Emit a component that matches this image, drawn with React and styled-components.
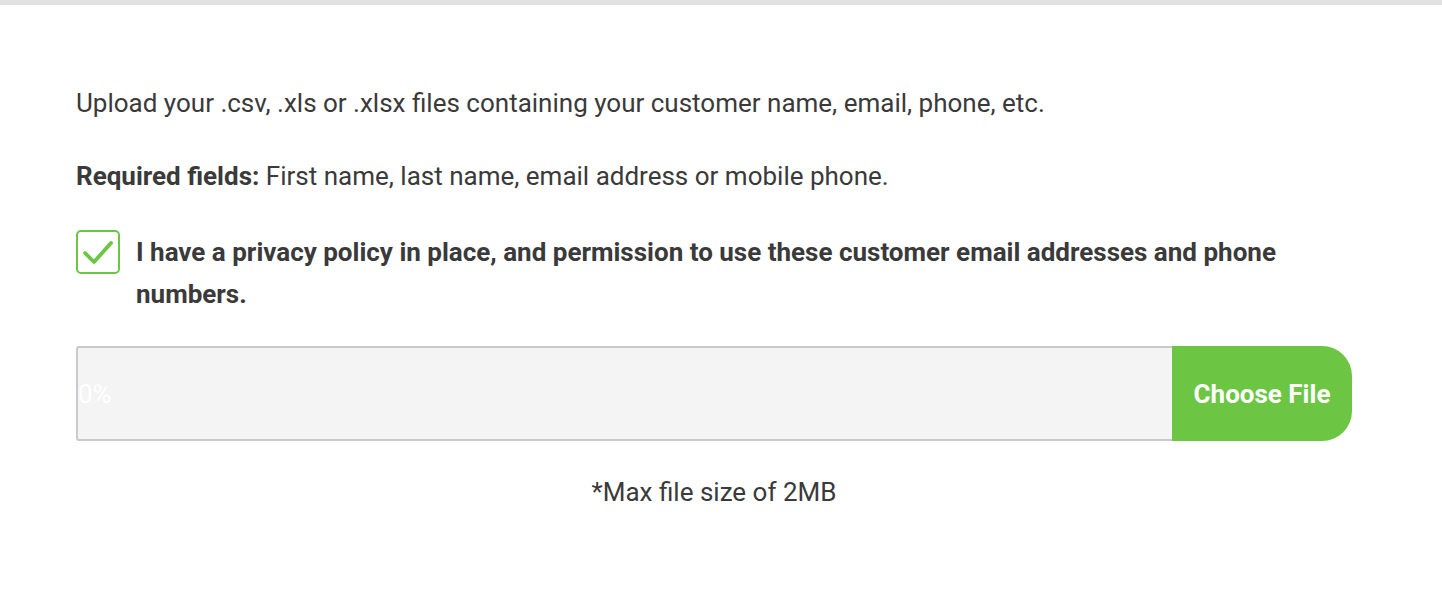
import React, { useState } from 'react'
import styled, { createGlobalStyle } from 'styled-components'

const GlobalStyle = createGlobalStyle`
  html, body {
    margin: 0;
    padding: 0;
    background: #ffffff;
  }
  body {
    font-family: 'Roboto', 'Liberation Sans', sans-serif;
    color: #3a3a3a;
  }
`

const TopBar = styled.div`
  height: 5px;
  background: #e2e2e2;
`

const Page = styled.div`
  padding: 83px 90px 0 76px;
`

const Paragraph = styled.p`
  margin: 0 0 ${p => p.$gap || 43}px;
  font-size: 26px;
  line-height: 30px;

  strong {
    font-weight: 700;
  }
`

const ConsentRow = styled.label`
  display: flex;
  align-items: flex-start;
  gap: 16px;
  cursor: pointer;
  margin-bottom: 31px;
`

const Box = styled.span`
  flex: 0 0 auto;
  display: flex;
  align-items: center;
  justify-content: center;
  width: 44px;
  height: 44px;
  box-sizing: border-box;
  border: 2px solid #6cc644;
  border-radius: 5px;
  background: #fff;
`

const ConsentText = styled.span`
  font-size: 26px;
  font-weight: 700;
  line-height: 42px;
  color: #3a3a3a;
  padding-right: 60px;
  margin-top: 1px;
`

const Uploader = styled.div`
  display: flex;
  height: 95px;
`

const Progress = styled.div`
  flex: 1;
  display: flex;
  align-items: center;
  box-sizing: border-box;
  background: #f4f4f4;
  border: 2px solid #c9cacd;
  border-right: none;
  border-radius: 3px 0 0 3px;
  font-size: 26px;
  color: #ffffff;
`

const ChooseButton = styled.button`
  flex: 0 0 180px;
  border: none;
  background: #6cc644;
  color: #ffffff;
  font-family: 'Roboto', 'Liberation Sans', sans-serif;
  font-weight: 700;
  font-size: 26px;
  border-radius: 0 30px 30px 0;
  cursor: pointer;
`

const Note = styled.p`
  margin: 36px 0 0;
  text-align: center;
  font-size: 26px;
  line-height: 30px;
  color: #3a3a3a;
`

export default function App() {
  const [checked, setChecked] = useState(true)
  return (
    <>
      <GlobalStyle />
      <TopBar />
      <Page>
        <Paragraph>
          Upload your .csv, .xls or .xlsx files containing your customer name, email, phone, etc.
        </Paragraph>
        <Paragraph $gap={39}>
          <strong>Required fields:</strong> First name, last name, email address or mobile phone.
        </Paragraph>
        <ConsentRow onClick={() => setChecked(!checked)}>
          <Box>
            {checked && (
              <svg width="32" height="28" viewBox="0 0 32 28" fill="none">
                <path d="M3 15 L12 24 L29 5" stroke="#6cc644" strokeWidth="3.8" strokeLinecap="round" strokeLinejoin="round" />
              </svg>
            )}
          </Box>
          <ConsentText>
            I have a privacy policy in place, and permission to use these customer email addresses and phone numbers.
          </ConsentText>
        </ConsentRow>
        <Uploader>
          <Progress>0%</Progress>
          <ChooseButton>Choose File</ChooseButton>
        </Uploader>
        <Note>*Max file size of 2MB</Note>
      </Page>
    </>
  )
}
